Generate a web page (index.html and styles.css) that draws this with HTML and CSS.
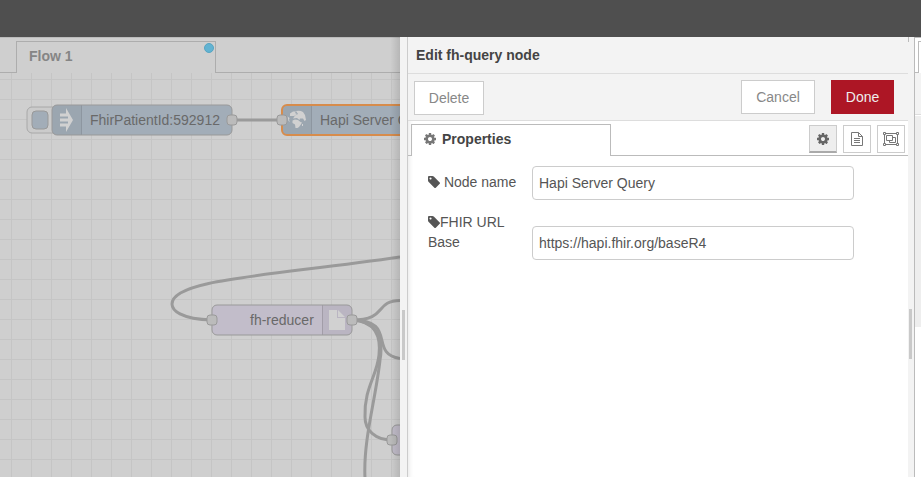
FILE: index.html
```html
<!DOCTYPE html>
<html lang="en">
<head>
<meta charset="utf-8">
<title>Flow editor</title>
<link rel="stylesheet" href="styles.css">
</head>
<body>
<svg class="defs" width="0" height="0" aria-hidden="true">
  <symbol id="cog" viewBox="0 0 1536 1536"><path fill-rule="evenodd" d="M1024 768q0-106-75-181t-181-75-181 75-75 181 75 181 181 75 181-75 75-181zm512-109v222q0 12-8 23t-20 13l-185 28q-19 54-39 91 35 50 107 138 10 12 10 25t-9 23q-27 37-99 108t-94 71q-12 0-26-9l-138-108q-44 23-91 38-16 136-29 186-7 28-36 28h-222q-14 0-24.500-8.500t-11.500-21.500l-28-184q-49-16-90-37l-141 107q-10 9-25 9-14 0-25-11-126-114-165-168-7-10-7-23 0-12 8-23 15-21 51-66.500t54-70.500q-27-50-41-99l-183-27q-13-2-21-12.500t-8-23.500v-222q0-12 8-23t19-13l186-28q14-46 39-92-40-57-107-138-10-12-10-24 0-10 9-23 26-36 98.500-107.500t94.500-71.500q13 0 26 10l138 107q44-23 91-38 16-136 29-186 7-28 36-28h222q14 0 24.500 8.500t11.500 21.500l28 184q49 16 90 37l142-107q9-9 24-9 13 0 25 10 129 119 165 170 7 8 7 22 0 12-8 23-15 21-51 66.500t-54 70.500q26 50 41 98l183 28q13 2 21 12.500t8 23.500z"/></symbol>
  <symbol id="tag" viewBox="0 0 1515 1515"><path fill-rule="evenodd" d="M448 320q0-53-37.500-90.500t-90.500-37.500-90.500 37.500-37.500 90.500 37.500 90.500 90.500 37.500 90.500-37.500 37.500-90.500zm1067 576q0 53-37 90l-491 492q-39 37-91 37-53 0-90-37l-715-716q-38-37-64.500-101t-26.500-117v-416q0-52 38-90t90-38h416q53 0 117 26.500t102 64.500l715 714q37 39 37 91z"/></symbol>
</svg>
<header class="topbar"></header>
<main class="editor">
  <section class="workspace">
    <nav class="tabs">
      <div class="tab">Flow 1<span class="changed"></span></div>
    </nav>
    <svg class="canvas" viewBox="0 73 400 404" width="400" height="404">
      <defs>
        <pattern id="grid" x="11" y="79" width="20" height="20" patternUnits="userSpaceOnUse">
          <path class="gridline" d="M0 .5H20M.5 0V20"/>
        </pattern>
      </defs>
      <rect y="73" width="400" height="404" fill="url(#grid)"/>
      <g class="wires">
        <path d="M232 120H282"/>
        <path d="M212 320C180 319 172 310 172 304C172 279 270 276 400 257"/>
        <path d="M352 320C388 320 374 301 400 300.500"/>
        <path d="M352 320C398 320 368 354 400 358.500"/>
        <path d="M352 320C376 321 381 337 379 355C377 376 364 388 365 417C365 430 375 440 392 440"/>
        <path d="M352 320C380 321 383 343 380 360C376 398 363 440 365 478"/>
      </g>
      <rect class="trigger" x="27" y="107" width="34" height="26" rx="5"/>
      <rect class="trigger-button" x="32" y="111" width="16" height="18" rx="4"/>
      <g>
        <rect class="node blue" x="52" y="105" width="180" height="30" rx="5"/>
        <path class="shade" d="M57 105.500H81V134.500H57Q52.500 134.500 52.500 130V110Q52.500 105.500 57 105.500Z"/>
        <path class="divider" d="M81.500 105.500V134.500"/>
        <path class="glyph" d="M60 113.500H66V108L73 120L66 132V126.500H60V123.500H68V121.500H60V118.500H68V116.500H60Z"/>
        <text x="90" y="125">FhirPatientId:592912</text>
        <rect class="port" x="227" y="115" width="10" height="10" rx="3"/>
      </g>
      <g>
        <rect class="node blue selected" x="282" y="105" width="180" height="30" rx="5"/>
        <path class="shade" d="M287 106H311V134H287Q283 134 283 130V110Q283 106 287 106Z"/>
        <path class="divider" d="M311.500 106V134"/>
        <path class="glyph" d="M290 113.500L293 111.500L296 111.500L295 113L297 114L294 116L290 116ZM296 111Q300 110 303 112L305 115L306 120L304.500 121L303 118.500L300 118.500L299.500 120L297 118L293 118.500L295 115.500L298 114ZM292.500 120.500L295 119.500L298 120L300.500 122L302 122.500L300.500 125L299 127L297.500 128L295.500 128L295 124.500L292.500 123ZM287.500 116.500L289.500 118L289 120L290 122L288.500 121ZM302 124H303V126H302Z"/>
        <text x="320" y="125">Hapi Server Query</text>
        <rect class="port" x="277" y="115" width="10" height="10" rx="3"/>
      </g>
      <g>
        <rect class="node purple" x="212" y="305" width="140" height="30" rx="5"/>
        <path class="shade" d="M322 305.500H347Q351.500 305.500 351.500 310V330Q351.500 334.500 347 334.500H322Z"/>
        <path class="divider" d="M322.500 305.500V334.500"/>
        <path class="glyph" d="M329 310H337V318H345V330H329ZM338 310L345 317H338Z"/>
        <text x="250" y="325">fh-reducer</text>
        <rect class="port" x="207" y="315" width="10" height="10" rx="3"/>
        <rect class="port" x="347" y="315" width="10" height="10" rx="3"/>
      </g>
      <rect class="node purple" x="392" y="425" width="100" height="30" rx="5"/>
      <rect class="port" x="387" y="435" width="10" height="10" rx="3"/>
    </svg>
  </section>
  <div class="handle"><span class="grip"></span></div>
  <section class="tray">
    <h1 class="title">Edit fh-query node</h1>
    <div class="toolbar">
      <button class="btn delete">Delete</button>
      <button class="btn cancel">Cancel</button>
      <button class="btn done">Done</button>
    </div>
    <div class="sections">
      <div class="section-tab"><svg width="12" height="12"><use href="#cog"/></svg>Properties</div>
      <div class="section-icons">
        <button class="icon active"><svg width="12" height="12"><use href="#cog"/></svg></button>
        <button class="icon"><svg width="12" height="14" viewBox="0 0 12 14"><path class="line" d="M.5.500H7.500L11.500 4.500V13.500H.5ZM7.500.500V4.500H11.500M3 6.500H9M3 8.500H9M3 10.500H9"/></svg></button>
        <button class="icon"><svg width="16" height="14" viewBox="0 0 16 14"><path class="line" d="M2.500 1.500H13.500M2.500 12.500H13.500M1.500 2.500V11.500M14.500 2.500V11.500M.5.500H2.500V2.500H.5ZM13.500.500H15.500V2.500H13.500ZM.5 11.500H2.500V13.500H.5ZM13.500 11.500H15.500V13.500H13.500ZM3.500 3.500H9.500V8.500H3.500ZM9.500 5.500H12.500V10.500H6.500V8.500"/></svg></button>
      </div>
    </div>
    <div class="form">
      <div class="row">
        <label><svg width="12" height="12"><use href="#tag"/></svg> Node name</label>
        <input type="text" value="Hapi Server Query">
      </div>
      <div class="row">
        <label class="upper"><svg width="12" height="12"><use href="#tag"/></svg>FHIR URL Base</label>
        <input class="lower" type="text" value="https://hapi.fhir.org/baseR4">
      </div>
    </div>
  </section>
  <div class="separator"><span class="grip"></span></div>
  <aside class="sidebar">
    <div class="side-tabs"><div class="side-tab"></div></div>
    <div class="side-tools"></div>
    <div class="side-body"></div>
  </aside>
</main>
</body>
</html>
```

FILE: styles.css
```css
* { box-sizing: border-box; }
body {
  margin: 0;
  width: 921px;
  height: 477px;
  overflow: hidden;
  display: flex;
  flex-direction: column;
  font: 14px/20px "Liberation Sans", Arial, sans-serif;
  color: #555;
  background: #fff;
}
.defs { position: absolute; }
.topbar { height: 37px; background: #4f4f4f; }
.editor { flex: 1; display: flex; min-height: 0; }

.workspace {
  position: relative;
  width: 400px;
  background: #cfcfcf;
  overflow: hidden;
}
.workspace::after {
  content: "";
  position: absolute;
  inset: 0 0 0 auto;
  width: 10px;
  background: linear-gradient(to right, transparent, rgba(0, 0, 0, .12));
}
.tabs { display: flex; height: 36px; padding-top: 4px; border-top: 1px solid #bbb; }
.tabs::before, .tabs::after { content: ""; border-bottom: 1px solid #adadad; }
.tabs::before { width: 16px; }
.tabs::after { flex: 1; }
.tab {
  position: relative;
  width: 200px;
  margin-top: -1px;
  padding: 4px 12px;
  border: 1px solid #adadad;
  border-bottom: 0;
  font-weight: bold;
  color: #858585;
}
.changed {
  position: absolute;
  top: 1px;
  right: 1px;
  width: 10px;
  height: 10px;
  border-radius: 50%;
  background: #62b3d2;
  border: 1px solid #57a5c2;
}
.canvas { display: block; }
.canvas text { font-size: 14px; fill: #696969; }
.gridline { stroke: #c5c5c5; fill: none; }
.wires path { fill: none; stroke: #9a9a9a; stroke-width: 3; }
.node { stroke: #999; stroke-width: 1; }
.blue { fill: #a2adb8; }
.purple { fill: #c2bdca; }
.selected { stroke: #d78c4c; stroke-width: 2; }
.shade { fill: #000; fill-opacity: .04; }
.divider { stroke: #000; stroke-opacity: .13; fill: none; }
.glyph { fill: #d1d1d1; }
.port { fill: #bbb; stroke: #999; }
.trigger { fill: #cbcbcb; stroke: #a8a8a8; }
.trigger-button { fill: #a2adb8; stroke: #999; }

.handle {
  display: flex;
  align-items: center;
  width: 8px;
  padding: 155px 0 0 2px;
  background: #f3f3f3;
  border-right: 1px solid #ccc;
}
.grip { width: 3px; height: 50px; background: #c9c9c9; }

.tray { width: 500px; background: #fff; box-shadow: inset 5px 0 5px -4px rgba(0, 0, 0, .1); }
.title {
  position: relative;
  height: 37px;
  margin: 0;
  padding: 8px;
  font-size: 14px;
  line-height: 20px;
  color: #444;
  background: #f3f3f3;
  border-bottom: 1px solid #ddd;
}
.title::after {
  content: "";
  position: absolute;
  top: 0;
  right: -1px;
  width: 1px;
  height: 5px;
  background: #bbb;
}
.toolbar {
  display: flex;
  height: 47px;
  padding: 6px 14px 6px 6px;
  background: #f3f3f3;
  border-bottom: 1px solid #ddd;
}
.btn {
  height: 34px;
  padding: 0;
  font: inherit;
  color: #888;
  background: #fff;
  border: 1px solid #ccc;
}
.delete { width: 70px; margin-top: 1px; }
.cancel { width: 74px; margin-left: auto; }
.done { width: 63px; margin-left: 16px; color: #eee; background: #ad1625; border-color: #ad1625; }
.sections { display: flex; height: 35px; padding-top: 3px; }
.sections::before { content: ""; width: 3px; border-bottom: 1px solid #bbb; }
.section-tab {
  display: flex;
  align-items: center;
  gap: 6px;
  width: 200px;
  padding: 0 12px 4px;
  border: 1px solid #bbb;
  border-bottom: 0;
  font-weight: bold;
  color: #444;
}
.section-tab svg { fill: #777; }
.section-icons {
  flex: 1;
  display: flex;
  justify-content: flex-end;
  gap: 6px;
  padding: 1px 3px 0 0;
  border-bottom: 1px solid #bbb;
}
.icon {
  display: flex;
  align-items: center;
  justify-content: center;
  width: 28px;
  height: 28px;
  padding: 0;
  background: #fff;
  border: 1px solid #ccc;
}
.icon.active { background: #eee; border-bottom: 2px solid #aaa; fill: #666; }
.line { fill: none; stroke: #777; }
.form { padding: 10px 20px; }
.row { display: flex; margin-bottom: 10px; }
.row label { width: 104px; padding: 6px 12px 0 0; }
.row .upper { padding-top: 2px; }
.row label svg { fill: #555; vertical-align: -1px; }
.row input {
  width: 322px;
  height: 34px;
  padding: 0 6px;
  font: inherit;
  color: #555;
  background: #fff;
  border: 1px solid #ccc;
  border-radius: 4px;
}
.row .lower { margin-top: 16px; }
.separator {
  display: flex;
  align-items: center;
  width: 7px;
  padding: 153px 0 0 1px;
  background: #f3f3f3;
  border-right: 1px solid #bbb;
}
.sidebar { flex: 1; display: flex; flex-direction: column; background: #fff; }
.side-tabs { display: flex; height: 36px; padding-top: 3px; border-top: 1px solid #bbb; }
.side-tabs::before { content: ""; width: 3px; border-bottom: 1px solid #bbb; }
.side-tab { flex: 1; border: 1px solid #bbb; border-width: 1px 0 0 1px; }
.side-tools { height: 42px; background: #f3f3f3; border-bottom: 1px solid #ddd; }
.side-body { height: 211px; margin-top: 1px; background: #eee; }
```
